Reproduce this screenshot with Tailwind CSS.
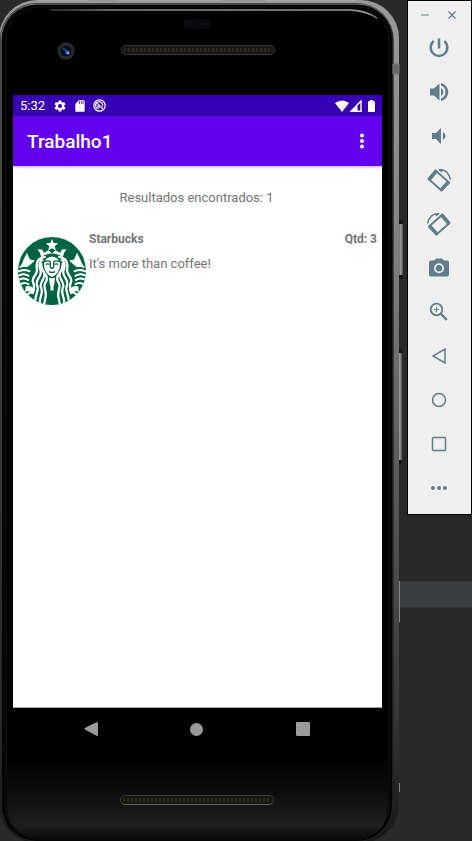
<!DOCTYPE html>
<html lang="pt-BR">
<head>
<meta charset="utf-8">
<meta name="viewport" content="width=device-width, initial-scale=1">
<title>Trabalho1</title>
<script src="https://cdn.jsdelivr.net/npm/@tailwindcss/browser@4"></script>
</head>
<body class="relative flex min-h-screen items-start bg-[#292929] font-['Roboto',sans-serif]">
  <div class="absolute inset-x-0 top-[581px] h-[27px] border-y border-[#343739] bg-[#3c3f41]" aria-hidden="true"></div>

  <main class="relative mr-2 flex min-h-screen flex-1 flex-col pl-[13px] pr-[17px]">
    <!-- Device body -->
    <svg class="absolute inset-0 h-full w-full overflow-visible" viewBox="0 0 399 841" preserveAspectRatio="none" aria-hidden="true">
      <defs>
        <linearGradient id="rim" x1="0" y1="0" x2="0" y2="1">
          <stop offset="0" stop-color="#999"/><stop offset=".25" stop-color="#858585"/><stop offset=".6" stop-color="#555"/><stop offset=".85" stop-color="#363636"/><stop offset="1" stop-color="#161616"/>
        </linearGradient>
        <linearGradient id="shine" x1="0" y1="0" x2="1" y2="0">
          <stop offset="0" stop-color="#333"/><stop offset=".2" stop-color="#7c8584"/><stop offset=".9" stop-color="#8c9594"/><stop offset="1" stop-color="#b4bcbb"/>
        </linearGradient>
        <linearGradient id="chin" x1="0" y1="0" x2="0" y2="1">
          <stop offset="0" stop-color="#000"/><stop offset=".35" stop-color="#080808"/><stop offset=".85" stop-color="#1e1e1e"/><stop offset="1" stop-color="#0a0a0a"/>
        </linearGradient>
        <linearGradient id="key" x1="0" y1="0" x2="1" y2="0">
          <stop offset="0" stop-color="#4d4d4d"/><stop offset=".5" stop-color="#969696"/><stop offset="1" stop-color="#555"/>
        </linearGradient>
      </defs>
      <rect x="397" y="220" width="6" height="59" rx="1" fill="#151515"/>
      <rect x="398" y="224" width="5" height="51" fill="url(#key)"/>
      <rect x="397" y="349" width="5" height="115" rx="1" fill="#151515"/>
      <rect x="397" y="353" width="5" height="107" fill="url(#key)"/>
      <path d="M399.500 581v41M399.500 783v9" stroke="#858585"/>
      <rect x="-1" y="0" width="400" height="843" rx="38" fill="url(#rim)"/>
      <rect x="0" y="3" width="394" height="839" rx="37" fill="#202020"/>
      <rect x="1" y="4" width="393" height="838" rx="36" fill="none" stroke="url(#rim)" stroke-opacity=".7"/>
      <rect x="2" y="5" width="390" height="836" rx="35" fill="#050505"/>
      <rect x="6" y="7" width="383" height="832" rx="33" fill="#000" stroke="#131313"/>
      <path d="M7 750H388V803Q388 838 355 838H41Q7 838 7 803Z" fill="url(#chin)"/>
      <path d="M50 9.500H350Q367 10 377 18Q365 11 350 10.500H50Z" fill="url(#shine)" stroke="url(#shine)" stroke-width=".6"/>
      <path d="M38 .5H89M118 .5H220M266 .5H355" stroke="#aaa"/>
      <path d="M393 64H399V74H393Z" fill="#666" stroke="#777"/>
      <path d="M393 771H398V779H393Z" fill="#292929"/>
    </svg>

    <header class="relative h-[95px] shrink-0" aria-hidden="true">
      <svg class="absolute left-[44px] top-[42px] h-[18px] w-[18px]" viewBox="0 0 18 18"><circle cx="9" cy="9" r="8.700" fill="#292929"/><circle cx="9" cy="9" r="5.500" fill="#0c101b"/><path d="M6 6l4 4" stroke="#263d8f" stroke-width="2"/><circle cx="10.500" cy="10.500" r="2.200" fill="#3d55b0"/><circle cx="11" cy="11" r="1" fill="#a9bcff"/></svg>
      <div class="absolute left-[171px] top-[19px] h-[10px] w-[27px] rounded-full bg-[#0a0a0f]"></div>
      <div class="absolute left-[108px] top-[45px] h-[10px] w-[154px] rounded-full border border-[#393939] bg-[#171511] p-[2px]"><div class="h-full rounded-full bg-[repeating-linear-gradient(90deg,#2c2922_0px,#2c2922_2px,#1a1814_2px,#1a1814_4px)]"></div></div>
    </header>

    <section class="relative flex flex-1 flex-col border-b border-[#aaa] bg-white" aria-label="Trabalho1">
      <div class="flex h-[21px] items-center bg-[#3700b3] pl-[7px] pr-[7px] text-white">
        <span class="text-[13px] leading-5">5:32</span>
        <svg class="ml-2 h-[14px] w-[14px]" viewBox="0 0 24 24" fill="currentColor" aria-hidden="true"><path d="M19.140 12.940c.04-.3.060-.61.060-.94s-.02-.64-.07-.94l2.030-1.580a.49.49 0 0 0 .12-.61l-1.920-3.320a.49.49 0 0 0-.59-.22l-2.390.96a7 7 0 0 0-1.620-.94l-.36-2.540a.48.48 0 0 0-.48-.41h-3.840a.48.48 0 0 0-.47.410l-.36 2.540c-.59.240-1.130.57-1.620.94l-2.390-.96a.49.49 0 0 0-.59.220L2.740 8.870a.48.48 0 0 0 .12.610l2.030 1.580a7 7 0 0 0 0 1.880l-2.030 1.580a.49.49 0 0 0-.12.610l1.920 3.320c.12.220.37.290.59.220l2.390-.96c.5.380 1.030.7 1.620.94l.36 2.540c.05.240.24.410.48.410h3.840c.24 0 .44-.17.470-.41l.36-2.540a7 7 0 0 0 1.620-.94l2.390.96c.22.080.47 0 .59-.22l1.920-3.320a.48.48 0 0 0-.12-.61zM12 15.600a3.600 3.600 0 1 1 0-7.200 3.600 3.600 0 0 1 0 7.200"/></svg>
        <svg class="ml-1.5 h-[14px] w-[14px]" viewBox="0 0 24 24" fill="currentColor" aria-hidden="true"><path d="M18 2h-8L4 8v12a2 2 0 0 0 2 2h12a2 2 0 0 0 2-2V4a2 2 0 0 0-2-2m-6 6h-1.500V4H12zm3 0h-1.500V4H15zm3 0h-1.500V4H18z"/></svg>
        <svg class="ml-1.5 h-[13px] w-[13px]" viewBox="0 0 24 24" fill="none" stroke="currentColor" stroke-width="2.200" aria-hidden="true"><circle cx="12" cy="12" r="10.500"/><path d="M10 18a6.500 6.500 0 1 1 7.500-4.500M8 8l10 10" /><path d="M9 11.500a3.500 3.500 0 0 0 4 4"/></svg>
        <svg class="ml-auto h-[12px] w-[14px]" viewBox="0 0 14 12" fill="currentColor" aria-hidden="true"><path d="M0 3Q7-2 14 3L7 12Z"/></svg>
        <svg class="ml-px h-[12px] w-[12px]" viewBox="0 0 12 12" aria-hidden="true"><path d="M1 11.200L11 1V11.200Z" fill="none" stroke="currentColor" stroke-width="1.400"/><path d="M1 11.500L7.500 5V11.500Z" fill="currentColor"/></svg>
        <svg class="ml-[6px] h-[12px] w-[7px]" viewBox="0 0 7 12" fill="currentColor" aria-hidden="true"><path d="M2 0h3v1h1q1 0 1 1v9q0 1-1 1H1q-1 0-1-1V2Q0 1 1 1h1Z"/></svg>
      </div>
      <div class="flex h-[50px] items-center justify-between bg-[#6200ee] pl-[14px] pr-2 text-white shadow-[0_1px_3px_rgba(0,0,0,.3)]">
        <h1 class="pt-0.5 text-[19px] font-medium leading-6">Trabalho1</h1>
        <button type="button" class="flex h-8 w-6 items-center justify-center" aria-label="Mais opções"><svg class="h-4 w-1" viewBox="0 0 4 16" fill="currentColor"><circle cx="2" cy="2.500" r="2"/><circle cx="2" cy="8" r="2"/><circle cx="2" cy="13.500" r="2"/></svg></button>
      </div>
      <p class="pr-0.5 pt-[22px] text-center text-[13px] leading-5 text-[#757575]">Resultados encontrados: 1</p>
      <article class="mt-[22px] flex px-[5px] text-[#757575]">
        <svg class="mt-[7px] h-[68px] w-[68px] shrink-0" viewBox="0 0 206 206" role="img" aria-label="Starbucks">
          <defs><clipPath id="disc"><circle cx="103" cy="103" r="103"/></clipPath></defs>
          <g clip-path="url(#disc)">
            <rect width="206" height="206" fill="#006341"/>
            <path d="M103 5l5 13 14 1-11 9 4 14-12-8-12 8 4-14-11-9 14-1Z" fill="#fff"/>
            <path d="M59 37l14 1 5 10 14-8 11 10 11-10 14 8 5-10 14-1-8 12-3 12Q103 38 70 61l-3-12Z" fill="#fff"/>
            <g id="side" fill="none" stroke="#fff" stroke-width="7">
              <path d="M27 48l9 20 15 3-13 12q-7 9-21 8L2 94Q14 82 17 68Z" fill="#fff" stroke="none"/>
              <path d="M-3 106Q20 94 37 105M-3 119Q18 107 34 119M-3 132Q18 120 33 132M3 146Q18 134 34 144" stroke-width="6"/>
              <path d="M24 149q17-4 28 12l-5 9q-12-8-26-4Z" fill="#fff" stroke="none"/>
              <path d="M24 180Q36 162 48 171" stroke-width="6"/>
              <path d="M84 60Q52 63 57 96C62 116 38 120 46 139Q53 153 42 166M76 67Q59 79 68 101C75 122 49 127 58 147C65 164 52 172 53 192M71 78Q68 93 79 108C87 124 62 137 70 154C78 172 64 181 66 202M82 112Q93 125 82 140C75 154 89 165 83 184L79 206"/>
            </g>
            <use href="#side" transform="translate(206 0) scale(-1 1)"/>
            <path d="M79 80Q84 61 103 59Q122 61 127 80Q129 108 103 121Q77 108 79 80Z" fill="#fff"/>
            <g fill="none" stroke="#006341" stroke-width="4"><path d="M82 75q8-5 16 0v17l5 3 5-3V75q8-5 16 0M84 83q6-3 11 0M111 83q6-3 11 0M94 105q9 5 18 0"/></g>
            <path d="M94 123q9 5 18 0L110 143Q105 152 108 162H98Q101 152 96 143Z" fill="#fff"/>
          </g>
        </svg>
        <div class="ml-[3px] min-w-0 flex-1">
          <div class="flex justify-between text-[12px] font-bold leading-[18px]"><h2>Starbucks</h2><span>Qtd: 3</span></div>
          <p class="mt-[6px] text-[13px] leading-5">It's more than coffee!</p>
        </div>
      </article>
    </section>

    <footer class="relative flex h-[133px] shrink-0 flex-col items-center justify-between pb-9 pr-0.5">
      <nav class="flex gap-16 text-[#9a9a9a]" aria-label="Navegação">
        <button type="button" class="flex h-[42px] w-[42px] items-center justify-center" aria-label="Voltar"><svg class="h-4 w-4" viewBox="0 0 16 16" fill="currentColor"><path d="M1 8Q1 7 14 1Q15 1 15 2V14Q15 15 14 15Z"/></svg></button>
        <button type="button" class="flex h-[42px] w-[42px] items-center justify-center" aria-label="Início"><span class="h-[13px] w-[13px] rounded-full bg-current"></span></button>
        <button type="button" class="flex h-[42px] w-[42px] items-center justify-center" aria-label="Recentes"><span class="h-[14px] w-[14px] rounded-[1px] bg-current"></span></button>
      </nav>
      <div class="h-[10px] w-[154px] rounded-full border border-[#393939] border-b-[#64645c] bg-[#171511] p-[2px]" aria-hidden="true"><div class="h-full rounded-full bg-[repeating-linear-gradient(90deg,#2c2922_0px,#2c2922_2px,#1a1814_2px,#1a1814_4px)]"></div></div>
    </footer>
  </main>

  <aside class="relative flex w-[65px] shrink-0 flex-col items-center border border-black bg-[#efefef] pb-1 pr-0.5 text-[#607d8b]" aria-label="Controles do emulador">
    <div class="flex h-[25px] items-center gap-[15px] pt-0.5">
      <button type="button" class="h-3 w-3" aria-label="Minimizar"><svg viewBox="0 0 12 12" fill="none" stroke="currentColor" stroke-opacity=".65" stroke-width="1.500"><path d="M2 6h8"/></svg></button>
      <button type="button" class="h-3 w-3" aria-label="Fechar"><svg viewBox="0 0 12 12" fill="none" stroke="currentColor" stroke-width="1.300"><path d="M2.500 2.500l7 7M9.500 2.500l-7 7"/></svg></button>
    </div>
    <button type="button" class="flex h-11 w-11 items-center justify-center" aria-label="Ligar"><svg class="h-6 w-6" viewBox="0 0 24 24" fill="none" stroke="currentColor" stroke-width="2.500"><path d="M12 2.500v10M6.700 5a8.400 8.400 0 1 0 10.600 0"/></svg></button>
    <button type="button" class="flex h-11 w-11 items-center justify-center" aria-label="Aumentar volume"><svg class="h-6 w-6" viewBox="0 0 24 24" fill="currentColor"><path d="M3 8.500v7h4l5.500 5V3.500L7 8.500zm13.500 3.500A4.500 4.500 0 0 0 14 7.970v8.050A4.500 4.500 0 0 0 16.500 12M14 3v2.500a7 7 0 0 1 0 13V21a9.200 9.200 0 0 0 0-18"/></svg></button>
    <button type="button" class="flex h-11 w-11 items-center justify-center" aria-label="Diminuir volume"><svg class="h-6 w-6" viewBox="0 0 24 24" fill="currentColor"><path d="M18.500 12A4.500 4.500 0 0 0 16 7.970v8.050A4.500 4.500 0 0 0 18.500 12M5 9v6h4l5 5V4L9 9z"/></svg></button>
    <button type="button" class="flex h-11 w-11 items-center justify-center" aria-label="Girar à esquerda"><svg class="h-6 w-6 overflow-visible" viewBox="0 0 24 24" fill="none" stroke="currentColor"><g id="rot"><path d="M8.500 2.500L22 14.500L14.500 22.500L1.500 11Z" stroke-width="1.800" stroke-linejoin="round"/><path d="M9 3.500L2.500 11M21 14.500L14.500 21.500" stroke-width="3.500" stroke-linecap="round"/><path d="M12 1.800Q21 1 23.500 11.500" stroke-width="1.500"/><path d="M11 1l5.500 .5-2 3Z" fill="currentColor" stroke="none"/></g></svg></button>
    <button type="button" class="flex h-11 w-11 items-center justify-center" aria-label="Girar à direita"><svg class="h-6 w-6 overflow-visible" viewBox="0 0 24 24" fill="none" stroke="currentColor"><use href="#rot" transform="translate(24 0) scale(-1 1)"/></svg></button>
    <button type="button" class="flex h-11 w-11 items-center justify-center" aria-label="Capturar tela"><svg class="h-6 w-6" viewBox="0 0 24 24" fill="currentColor" fill-rule="evenodd"><path d="M9 2.500L7.200 4.500H4a2 2 0 0 0-2 2v12a2 2 0 0 0 2 2h16a2 2 0 0 0 2-2v-12a2 2 0 0 0-2-2h-3.200L15 2.500ZM12 7.300a5 5 0 1 1 0 10 5 5 0 0 1 0-10"/><circle cx="12" cy="12.300" r="3.200"/></svg></button>
    <button type="button" class="flex h-11 w-11 items-center justify-center" aria-label="Ampliar"><svg class="h-6 w-6" viewBox="0 0 24 24" fill="none" stroke="currentColor" stroke-width="1.800"><circle cx="9.500" cy="9.500" r="5.800"/><path d="M13.500 13.500l6.300 6.300" stroke-width="2.400"/><path d="M9.500 7v5M7 9.500h5" stroke-width="1.200"/></svg></button>
    <button type="button" class="flex h-11 w-11 items-center justify-center" aria-label="Voltar no dispositivo"><svg class="h-6 w-6" viewBox="0 0 24 24" fill="none" stroke="currentColor" stroke-width="1.500"><path d="M18 5v14L6 12Z"/></svg></button>
    <button type="button" class="flex h-11 w-11 items-center justify-center" aria-label="Início do dispositivo"><svg class="h-6 w-6" viewBox="0 0 24 24" fill="none" stroke="currentColor" stroke-width="1.500"><circle cx="12" cy="12" r="6.500"/></svg></button>
    <button type="button" class="flex h-11 w-11 items-center justify-center" aria-label="Visão geral"><svg class="h-6 w-6" viewBox="0 0 24 24" fill="none" stroke="currentColor" stroke-width="1.500"><rect x="5.500" y="5.500" width="13" height="13" rx="1"/></svg></button>
    <button type="button" class="flex h-11 w-11 items-center justify-center" aria-label="Mais controles"><svg class="h-6 w-6" viewBox="0 0 24 24" fill="currentColor"><circle cx="6" cy="12" r="2"/><circle cx="12" cy="12" r="2"/><circle cx="18" cy="12" r="2"/></svg></button>
  </aside>
</body>
</html>
